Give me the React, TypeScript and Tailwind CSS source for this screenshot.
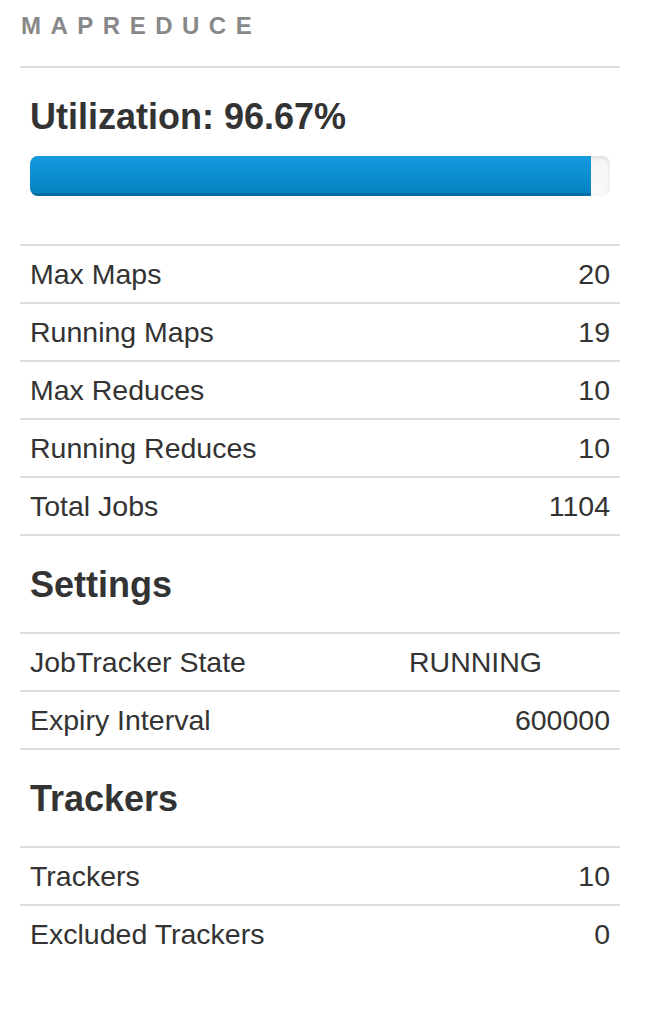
type Row = { label: string; value: string; left?: boolean };

const stats: Row[] = [
  { label: "Max Maps", value: "20" },
  { label: "Running Maps", value: "19" },
  { label: "Max Reduces", value: "10" },
  { label: "Running Reduces", value: "10" },
  { label: "Total Jobs", value: "1104" },
];

const settings: Row[] = [
  { label: "JobTracker State", value: "RUNNING", left: true },
  { label: "Expiry Interval", value: "600000" },
];

const trackers: Row[] = [
  { label: "Trackers", value: "10" },
  { label: "Excluded Trackers", value: "0" },
];

function Table({ rows, last }: { rows: Row[]; last?: boolean }) {
  return (
    <div className={last ? "" : "border-b-2 border-[#dddddd]"}>
      {rows.map((r) => (
        <div
          key={r.label}
          className="flex items-center h-[58px] border-t-2 border-[#dddddd] text-[28.5px] leading-[40px] text-[#333333]"
        >
          <div className="flex-1 px-[10px]">{r.label}</div>
          {r.left ? (
            <div className="w-[221px] px-[10px] text-left">{r.value}</div>
          ) : (
            <div className="px-[10px] text-right">{r.value}</div>
          )}
        </div>
      ))}
    </div>
  );
}

function Heading({ children }: { children: React.ReactNode }) {
  return (
    <h4 className="mt-[29px] mb-[27px] px-[10px] text-[36px] leading-[40px] font-bold text-[#333333]">
      {children}
    </h4>
  );
}

export default function App() {
  const utilization = 96.67;
  return (
    <div
      className="min-h-screen bg-white"
      style={{ fontFamily: '"Liberation Sans", Arial, sans-serif' }}
    >
      <div className="ml-[20px] w-[600px] pt-[15px]">
        <h6 className="pl-[1px] text-[24px] leading-[22px] font-bold tracking-[9.5px] text-[#888888] uppercase">
          MapReduce
        </h6>
        <div className="mt-[29px] border-t-2 border-[#dddddd]" />

        <div className="px-[10px]">
          <h4 className="mt-[29px] text-[36px] leading-[40px] font-bold text-[#333333]">
            Utilization: {utilization}%
          </h4>
          <div className="mt-[19px] h-[40px] rounded-[8px] overflow-hidden bg-gradient-to-b from-[#f5f5f5] to-[#f9f9f9] shadow-[inset_0_2px_4px_rgba(0,0,0,0.1)]">
            <div
              className="h-full bg-gradient-to-b from-[#149bdf] to-[#0480be] shadow-[inset_0_-3px_0_rgba(0,0,0,0.15)]"
              style={{ width: `${utilization}%` }}
            />
          </div>
        </div>

        <div className="mt-[48px]">
          <Table rows={stats} />
        </div>

        <Heading>Settings</Heading>
        <Table rows={settings} />

        <Heading>Trackers</Heading>
        <Table rows={trackers} last />
      </div>
    </div>
  );
}
